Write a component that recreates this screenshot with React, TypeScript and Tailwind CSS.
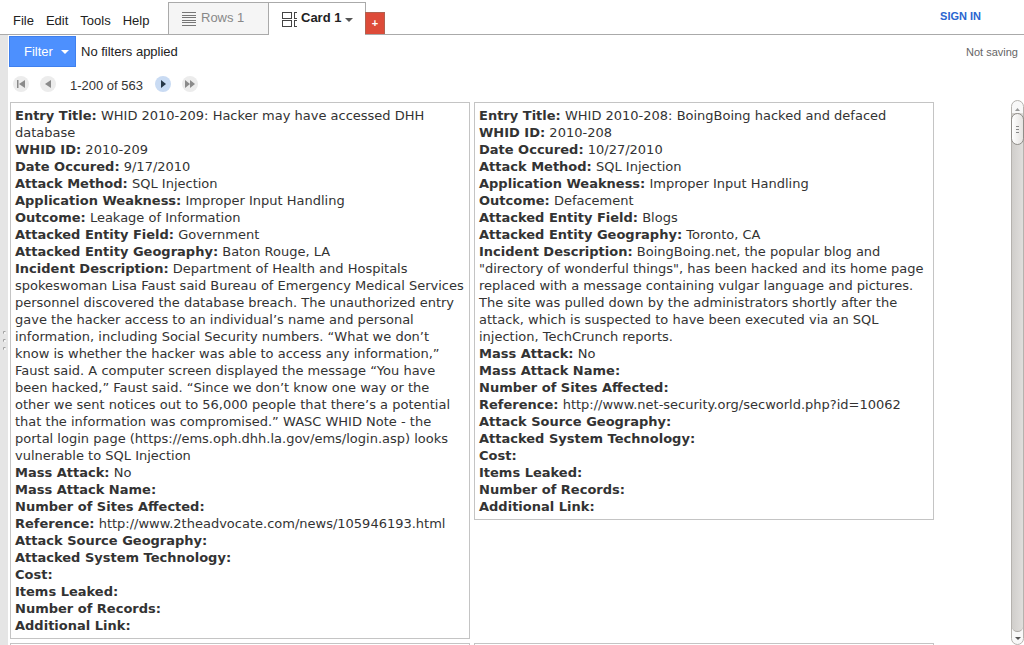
import React from "react";

type Field = [label: string, value: string];

const cards: Field[][] = [
  [
    ["Entry Title", "WHID 2010-209: Hacker may have accessed DHH database"],
    ["WHID ID", "2010-209"],
    ["Date Occured", "9/17/2010"],
    ["Attack Method", "SQL Injection"],
    ["Application Weakness", "Improper Input Handling"],
    ["Outcome", "Leakage of Information"],
    ["Attacked Entity Field", "Government"],
    ["Attacked Entity Geography", "Baton Rouge, LA"],
    [
      "Incident Description",
      "Department of Health and Hospitals spokeswoman Lisa Faust said Bureau of Emergency Medical Services personnel discovered the database breach. The unauthorized entry gave the hacker access to an individual’s name and personal information, including Social Security numbers. “What we don’t know is whether the hacker was able to access any information,” Faust said. A computer screen displayed the message “You have been hacked,” Faust said. “Since we don’t know one way or the other we sent notices out to 56,000 people that there’s a potential that the information was compromised.” WASC WHID Note - the portal login page (https://ems.oph.dhh.la.gov/ems/login.asp) looks vulnerable to SQL Injection",
    ],
    ["Mass Attack", "No"],
    ["Mass Attack Name", ""],
    ["Number of Sites Affected", ""],
    ["Reference", "http://www.2theadvocate.com/news/105946193.html"],
    ["Attack Source Geography", ""],
    ["Attacked System Technology", ""],
    ["Cost", ""],
    ["Items Leaked", ""],
    ["Number of Records", ""],
    ["Additional Link", ""],
  ],
  [
    ["Entry Title", "WHID 2010-208: BoingBoing hacked and defaced"],
    ["WHID ID", "2010-208"],
    ["Date Occured", "10/27/2010"],
    ["Attack Method", "SQL Injection"],
    ["Application Weakness", "Improper Input Handling"],
    ["Outcome", "Defacement"],
    ["Attacked Entity Field", "Blogs"],
    ["Attacked Entity Geography", "Toronto, CA"],
    [
      "Incident Description",
      'BoingBoing.net, the popular blog and "directory of wonderful things", has been hacked and its home page replaced with a message containing vulgar language and pictures. The site was pulled down by the administrators shortly after the attack, which is suspected to have been executed via an SQL injection, TechCrunch reports.',
    ],
    ["Mass Attack", "No"],
    ["Mass Attack Name", ""],
    ["Number of Sites Affected", ""],
    ["Reference", "http://www.net-security.org/secworld.php?id=10062"],
    ["Attack Source Geography", ""],
    ["Attacked System Technology", ""],
    ["Cost", ""],
    ["Items Leaked", ""],
    ["Number of Records", ""],
    ["Additional Link", ""],
  ],
  [],
  [],
];

const menus = ["File", "Edit", "Tools", "Help"];

function Card({ fields }: { fields: Field[] }) {
  return (
    <article className="min-h-12 w-[460px] border border-[#c4c4c4] p-1 font-['DejaVu_Sans',sans-serif] text-[13px] leading-[17px] text-[#333]">
      {fields.map(([label, value]) => (
        <p key={label}>
          <b>{label}:</b> {value}
        </p>
      ))}
    </article>
  );
}

function RowsIcon() {
  return (
    <svg width="14" height="14" viewBox="0 0 14 14" stroke="#777" shapeRendering="crispEdges" aria-hidden="true">
      <path d="M0 .5h14M0 3.5h14M0 5.5h14M0 8.5h14M0 10.5h14M0 13.5h14" />
    </svg>
  );
}

function CardsIcon() {
  return (
    <svg width="15" height="15" viewBox="0 0 15 15" fill="none" stroke="#444" shapeRendering="crispEdges" aria-hidden="true">
      <path d="M.5.5h9v6h-9zM.5 8.5h9v6h-9zM15 .5h-2.500v6H15M15 8.500h-2.500v6H15" />
    </svg>
  );
}

function Caret({ className }: { className: string }) {
  return (
    <svg width="8" height="4" viewBox="0 0 8 4" fill="currentColor" className={className} aria-hidden="true">
      <path d="M0 0h8L4 4z" />
    </svg>
  );
}

function PageButton({ label, path, active = false }: { label: string; path: string; active?: boolean }) {
  return (
    <button
      type="button"
      aria-label={label}
      className={`flex size-4 items-center justify-center rounded-full ${
        active ? "bg-[#c9dbf3] text-[#263746]" : "bg-[#ececec] text-[#8a8a8a]"
      }`}
    >
      <svg width="16" height="16" viewBox="0 0 16 16" fill="currentColor" aria-hidden="true">
        <path d={path} />
      </svg>
    </button>
  );
}

function Scrollbar() {
  return (
    <div className="flex w-[13px] shrink-0 flex-col rounded-full border border-[#b5b2ae] bg-[#f8f8f8]">
      <button type="button" aria-label="Scroll up" className="flex h-4 items-center justify-center rounded-t-full text-[#999]">
        <svg width="5" height="3" viewBox="0 0 5 3" fill="currentColor" aria-hidden="true">
          <path d="M0 3h5L2.500 0z" />
        </svg>
      </button>
      <div className="-mt-1 flex grow flex-col rounded-b-full border-b border-[#aaa7a3] bg-linear-to-r from-[#d0cecb] to-[#e0dedc]">
        <div className="-mx-px flex h-8 items-center justify-center rounded-full border border-[#908d89] bg-linear-to-r from-white to-[#e5e3e1]">
          <svg width="3" height="7" viewBox="0 0 3 7" stroke="#888" shapeRendering="crispEdges" aria-hidden="true">
            <path d="M0 .5h3M0 3.500h3M0 6.500h3" />
          </svg>
        </div>
      </div>
      <button type="button" aria-label="Scroll down" className="flex h-3 items-center justify-center rounded-b-full text-[#555]">
        <svg width="6" height="3" viewBox="0 0 6 3" fill="currentColor" aria-hidden="true">
          <path d="M0 0h6L3 3z" />
        </svg>
      </button>
    </div>
  );
}

export default function App() {
  return (
    <div className="flex h-screen flex-col overflow-hidden bg-white font-['Liberation_Sans',Arial,sans-serif] text-[13px] text-[#333]">
      <header className="flex h-[35px] shrink-0 items-stretch border-b border-[#aaa]">
        <nav className="flex w-[168px] gap-3 pt-[11px] pl-[13px] leading-5 text-[#222]">
          {menus.map((menu) => (
            <button key={menu} type="button" className="h-5">
              {menu}
            </button>
          ))}
        </nav>
        <div className="flex items-end">
          <button type="button" className="flex h-8 w-[101px] items-start gap-[5px] border border-b-0 border-[#aaa] bg-[#f5f5f5] pt-[5px] pl-[13px] leading-5 text-[#888]">
            <span className="pt-1">
              <RowsIcon />
            </span>
            Rows 1
          </button>
          <button type="button" className="-mb-px -ml-px flex h-[33px] w-[98px] items-start gap-1 border border-b-0 border-[#aaa] bg-white pt-[5px] pl-[13px] leading-5 font-bold text-[#222]">
            <span className="pt-1">
              <CardsIcon />
            </span>
            Card 1
            <Caret className="mt-[10px] text-[#555]" />
          </button>
          <button type="button" aria-label="Add tab" className="-ml-px flex h-[22px] w-5 items-center justify-center border border-b-0 border-[#b0614f] bg-[#dd4b39] text-[11px] font-bold text-white">
            +
          </button>
        </div>
        <a href="#sign-in" className="mr-[43px] ml-auto pt-[6px] text-[11px] leading-5 font-bold text-[#2a65d0]">
          SIGN IN
        </a>
      </header>

      <div className="flex min-h-0 grow">
        <aside className="flex w-2 shrink-0 flex-col items-center justify-center gap-[5px] bg-[#e5e5e5]">
          <i className="size-[3px] rounded-full border-t border-l border-[#999] bg-white" />
          <i className="size-[3px] rounded-full border-t border-l border-[#999] bg-white" />
          <i className="size-[3px] rounded-full border-t border-l border-[#999] bg-white" />
        </aside>

        <main className="flex min-w-0 grow flex-col">
          <div className="flex h-8 shrink-0 items-center pt-px pl-px">
            <button type="button" className="flex h-[31px] w-[67px] items-center gap-2 border border-[#3f80ee] bg-[#4d90fe] pl-[14px] text-white">
              Filter
              <Caret className="text-white" />
            </button>
            <span className="ml-[5px] text-[#222]">No filters applied</span>
            <span className="mr-[6px] ml-auto pt-px text-[11px] text-[#666]">Not saving</span>
          </div>

          <div className="flex h-[33px] shrink-0 items-center pl-[5px]">
            <div className="flex gap-[11px]">
              <PageButton label="First page" path="M4 4h1.500v8H4zM12 4v8L6 8z" />
              <PageButton label="Previous page" path="M11 4v8L5 8z" />
            </div>
            <span className="mr-3 ml-[14px] pt-1">1-200 of 563</span>
            <div className="flex gap-[11px]">
              <PageButton label="Next page" path="M6 4v8l5-4z" active />
              <PageButton label="Last page" path="M3 4v8l5-4zM8 4v8l5-4z" />
            </div>
          </div>

          <div className="flex min-h-0 grow">
            <section className="flex grow flex-wrap content-start items-start gap-1 overflow-hidden pt-[2px] pl-[2px]">
              {cards.map((fields, index) => (
                <Card key={index} fields={fields} />
              ))}
            </section>
            <Scrollbar />
          </div>
        </main>
      </div>
    </div>
  );
}
